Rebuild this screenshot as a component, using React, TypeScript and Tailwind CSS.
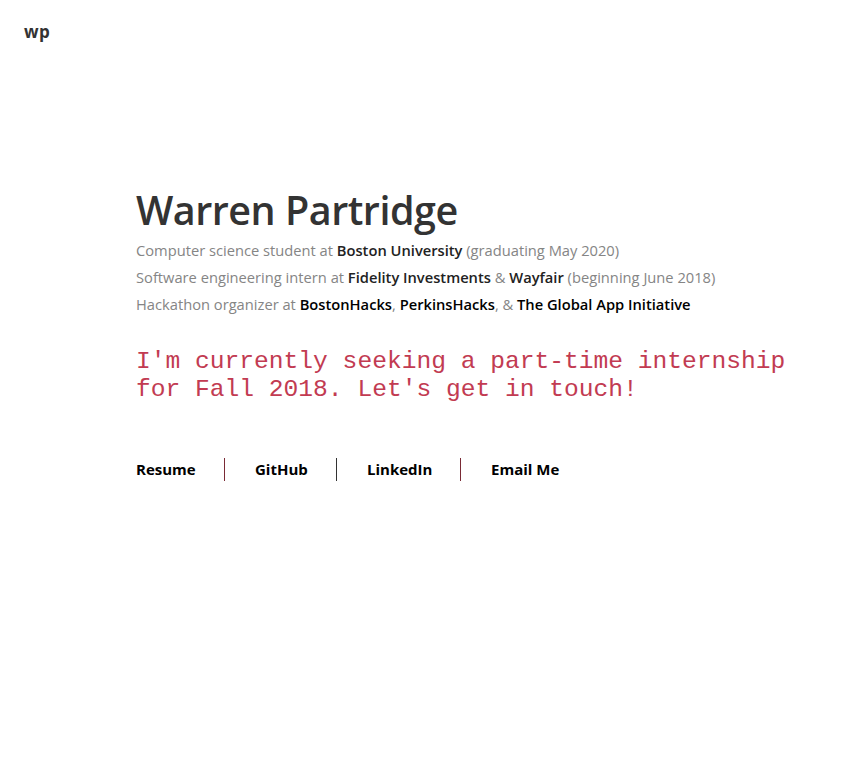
import React from 'react'

const sans = { fontFamily: '"Open Sans", "Liberation Sans", sans-serif' }

export default function App() {
  return (
    <main className="min-h-screen bg-white text-[#333]" style={sans}>
      {/* Logo */}
      <header className="px-6 pt-[19px]">
        <span className="text-[17px] font-bold tracking-[0.5px] text-[#333]">wp</span>
      </header>

      <section className="pl-[136px] pt-[141px]">
        <h1 className="text-[39.5px] font-semibold leading-[48px] tracking-[-0.5px] text-[#333]">Warren Partridge</h1>

        <div className="mt-[3px] text-[14.7px] leading-[27px] text-[#858585]">
          <p>
            Computer science student at <b className="font-semibold text-[#222]">Boston University</b> (graduating May 2020)
          </p>
          <p>
            Software engineering intern at <b className="font-semibold text-[#222]">Fidelity Investments</b> &amp;{' '}
            <b className="font-semibold text-[#222]">Wayfair</b> (beginning June 2018)
          </p>
          <p>
            Hackathon organizer at <b className="font-semibold text-black">BostonHacks</b>,{' '}
            <b className="font-semibold text-black">PerkinsHacks</b>, &amp;{' '}
            <b className="font-semibold text-black">The Global App Initiative</b>
          </p>
        </div>

        <p
          className="mt-[30px] text-[24.6px] leading-[28px] text-[#c23b52]"
          style={{ fontFamily: '"Liberation Mono", "DejaVu Sans Mono", monospace' }}
        >
          I'm currently seeking a part-time internship
          <br />
          for Fall 2018. Let's get in touch!
        </p>

        {/* Links */}
        <nav className="mt-[54px] flex items-center text-[15px] font-bold text-black">
          <a href="#" className="w-[88px]">Resume</a>
          <span className="h-[23px] w-px bg-[#7a2a35]" />
          <a href="#" className="w-[111px] pl-[30px]">GitHub</a>
          <span className="h-[23px] w-px bg-[#333]" />
          <a href="#" className="w-[123px] pl-[30px]">LinkedIn</a>
          <span className="h-[23px] w-px bg-[#7a2a35]" />
          <a href="#" className="pl-[30px]">Email Me</a>
        </nav>
      </section>
    </main>
  )
}
